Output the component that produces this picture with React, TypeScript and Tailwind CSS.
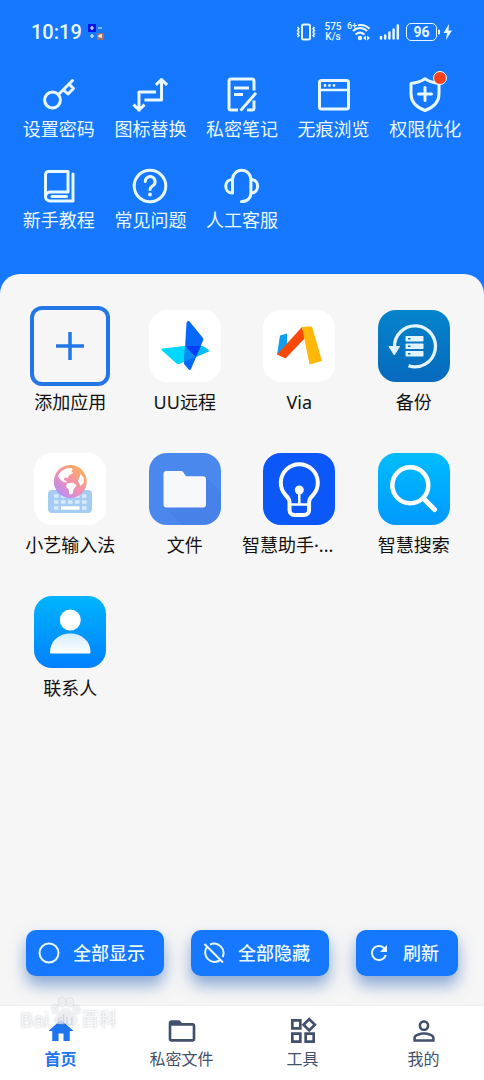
import type { ReactNode } from "react";
import { MdFolderOpen, MdHome, MdOutlineWidgets, MdPersonOutline, MdRefresh } from "react-icons/md";

/* Line icons of the header, all on a 36px grid */
function LineIcon({ children }: { children: ReactNode }) {
  return (
    <svg
      viewBox="0 0 36 36"
      className="size-9"
      fill="none"
      stroke="currentColor"
      strokeWidth="3"
      strokeLinecap="round"
      strokeLinejoin="round"
      aria-hidden="true"
    >
      {children}
    </svg>
  );
}

const shortcuts = [
  {
    label: "设置密码",
    icon: (
      <LineIcon>
        <circle cx="11.5" cy="23" r="7.9" />
        <path d="M17.5 17.5 31.500 3.500M22.500 13l4.500 4 5.500-5.500-4.500-4.500" />
      </LineIcon>
    ),
  },
  {
    label: "图标替换",
    icon: (
      <LineIcon>
        <path d="M14 23h15.5V3M25 6.800l4.500-4.300L34 6.800M22.500 15H7v18M2.500 28.700 7 33l4.500-4.300" strokeLinecap="square" />
      </LineIcon>
    ),
  },
  {
    label: "私密笔记",
    icon: (
      <LineIcon>
        <path d="M12.500 33H7a2 2 0 0 1-2-2V4a2 2 0 0 1 2-2h21a2 2 0 0 1 2 2v8M30 25v6a2 2 0 0 1-2 2h-3.500M11.500 11h12M11.500 17.500h6M31 17 17.500 32.500" strokeLinecap="square" />
      </LineIcon>
    ),
  },
  {
    label: "无痕浏览",
    icon: (
      <LineIcon>
        <rect x="3.500" y="3.500" width="29" height="28.500" rx="2" />
        <path d="M4 13h28" strokeWidth="2.500" />
        <path d="M9 8.500h.01M13.500 8.500h.01M18 8.500h.01" strokeWidth="2.800" />
      </LineIcon>
    ),
  },
  {
    label: "权限优化",
    badge: true,
    icon: (
      <LineIcon>
        <path d="M18 1.800C14 4.600 9 6 4 6.500v10.500c0 8 6 13.500 14 16.500 8-3 14-8.500 14-16.500V6.500C27 6 22 4.600 18 1.800Z" />
        <path d="M18 10.500v13M11.500 17h13" />
      </LineIcon>
    ),
  },
  {
    label: "新手教程",
    icon: (
      <LineIcon>
        <path d="M4.500 29V6.500a3 3 0 0 1 3-3H27v20.500H9a4.500 4.500 0 0 0 0 9h23V6" />
        <path d="M11 28.500h14.500" />
      </LineIcon>
    ),
  },
  {
    label: "常见问题",
    icon: (
      <LineIcon>
        <circle cx="18" cy="18" r="15.800" />
        <path d="M13.300 13.500a4.900 4.900 0 1 1 7.500 4.200c-1.800 1.200-2.800 2-2.800 3.800" />
        <path d="M18 26.500h.01" strokeWidth="3.800" />
      </LineIcon>
    ),
  },
  {
    label: "人工客服",
    icon: (
      <LineIcon>
        <path d="M8.500 25V11.500a9.200 9.200 0 0 1 18.400 0V24.500c0 5.500-3.500 9-9.400 9M8.500 11.500c-9 0-9 13.500 0 13.500M26.900 11.500c9 0 9 13.500 0 13.500" />
      </LineIcon>
    ),
  },
];

function AppIcon({ children }: { children: ReactNode }) {
  return (
    <svg viewBox="0 0 72 72" className="size-18" fill="none" aria-hidden="true">
      {children}
    </svg>
  );
}

const apps = [
  {
    name: "UU远程",
    bg: "bg-white",
    icon: (
      <AppIcon>
        <path d="M13.500 38.500 35.500 36H54l5.500 4a1 1 0 0 1 0 1.500L30 54a3 3 0 0 1-2.500-.5L13 40.500c-1-1-.5-1.800.5-2Z" fill="#00d8fb" />
        <path d="M53 36l6.500 4a1 1 0 0 1 0 1.500L46 47.500Z" fill="#0cbdf5" />
        <path d="M37.500 13c0-1.500 2-2.500 3-1.500L54 28c.5.7.6 1.300.3 2L42 59c-.5 1-1.500 1.200-2.300.4L35 54Z" fill="#0668f8" />
        <path d="M36.500 36H52l-5.500 11Z" fill="#0040f4" />
        <path d="M36 36 46.500 47 35.500 51.500Z" fill="#0a8cf5" />
      </AppIcon>
    ),
  },
  {
    name: "Via",
    bg: "bg-white",
    icon: (
      <AppIcon>
        <path d="M17 25.500 24 23.500V36L14 45Z" fill="#119ff0" />
        <path d="M39 17 14 44.500l8.500 4L42 28Z" fill="#fb4805" />
        <path d="M39 17l8.500-.5c1 0 1.700.5 2 1.500l9.500 33-12.500 3.500Z" fill="#ffb80a" />
      </AppIcon>
    ),
  },
  {
    name: "备份",
    bg: "bg-linear-to-b from-[#0584cb] to-[#0769bd]",
    icon: (
      <AppIcon>
        <path d="M16.500 37a20.500 20.500 0 1 1 14 18.800" stroke="#e4f4fe" strokeWidth="3.300" />
        <path d="M11 36.500h10.500L16.300 45Z" fill="#e4f4fe" stroke="#e4f4fe" strokeLinejoin="round" />
        <g fill="#e4f4fe">
          <rect x="27.500" y="26" width="18" height="5.500" rx=".8" />
          <rect x="27.500" y="33.500" width="18" height="5.500" rx=".8" />
          <rect x="27.500" y="41" width="18" height="5.500" rx=".8" />
        </g>
        <path d="M30 28.700h2.500M30 36.200h2.500M30 43.700h2.500" stroke="#0777c4" strokeWidth="1.500" />
      </AppIcon>
    ),
  },
  {
    name: "小艺输入法",
    bg: "bg-white",
    icon: (
      <AppIcon>
        <defs>
          <linearGradient id="globe" x1="24" y1="40" x2="46" y2="15" gradientUnits="userSpaceOnUse">
            <stop stopColor="#b98df5" />
            <stop offset=".45" stopColor="#f08fb4" />
            <stop offset="1" stopColor="#f9b060" />
          </linearGradient>
        </defs>
        <rect x="14" y="37" width="44" height="23" rx="4" fill="#a5cdf3" />
        <path d="M20 43h4.500M27 43h4.500M34 43h4.500M41 43h4.500M48 43h4.500M20 49h4.500M27 49h4.500M34 49h4.500M41 49h4.500M48 49h4.500M20 55h4.500M48 55h4.500" stroke="#d8eafc" strokeWidth="3.500" />
        <path d="M27 55h18.500" stroke="#fff" strokeWidth="3.500" />
        <circle cx="36.300" cy="28.500" r="16.500" fill="url(#globe)" />
        <path d="M24 23c2-5 7-8 13-8 2 .5 2 2 .5 3l1.500 2-3.500 2-2 3-3-.5-.5 2.500 3 1.500-1 1c-4 0-6-3-8-6.500ZM33 30.500l6-1 3.500 3-3 4-1 4.500-3 .5-1-5-2.500-3ZM46.500 21l3 3.500.5 5-3.500 3.500-2.500-5Z" fill="#fff" />
      </AppIcon>
    ),
  },
  {
    name: "文件",
    bg: "bg-[#4a88ee]",
    icon: (
      <AppIcon>
        <path d="m57 24 15 15v15c0 12-6 18-18 18H33.500L16 54Z" fill="#3e78dd" opacity=".35" />
        <path d="M17.500 18H32c1 0 1.800.4 2.300 1.200l2.700 4h17a3 3 0 0 1 3 3V51.500a3 3 0 0 1-3 3H17.500a3 3 0 0 1-3-3V21a3 3 0 0 1 3-3Z" fill="#f7f8fa" />
      </AppIcon>
    ),
  },
  {
    name: "智慧助手·...",
    long: true,
    bg: "bg-[#0b57f7]",
    icon: (
      <AppIcon>
        <path d="M26.500 49c0-3-2-5-4-7a18.500 18.500 0 1 1 27.600 0c-2 2-4 4-4 7v8c0 3-2 5-5 5h-9.600c-3 0-5-2-5-5Z" stroke="#fff" strokeWidth="4" />
        <path d="M27 51.500h19M36.300 37v14" stroke="#fff" strokeWidth="2.500" />
        <circle cx="36.300" cy="37" r="4.500" fill="#fff" />
      </AppIcon>
    ),
  },
  {
    name: "智慧搜索",
    bg: "bg-linear-to-b from-[#02bdfd] to-[#0399fd]",
    icon: (
      <AppIcon>
        <circle cx="32.300" cy="32.300" r="18" stroke="#fff" strokeWidth="4.500" />
        <path d="m46 46 10.500 10.500" stroke="#fff" strokeWidth="5" strokeLinecap="round" />
      </AppIcon>
    ),
  },
  {
    name: "联系人",
    bg: "bg-linear-to-b from-[#03b4fd] to-[#0480fd]",
    icon: (
      <AppIcon>
        <defs>
          <linearGradient id="body" x1="36" y1="37" x2="36" y2="58" gradientUnits="userSpaceOnUse">
            <stop stopColor="#d3ecfe" />
            <stop offset="1" stopColor="#fff" />
          </linearGradient>
        </defs>
        <circle cx="36.300" cy="24" r="10.500" fill="#fff" />
        <path d="M16 56c0-11 9-18.500 20.300-18.500S56.500 45 56.500 56c0 1-.5 1.500-1.500 1.500H17.500c-1 0-1.500-.5-1.500-1.500Z" fill="url(#body)" />
      </AppIcon>
    ),
  },
];

const actions = [
  {
    label: "全部显示",
    icon: (
      <svg viewBox="0 0 24 24" className="size-6" fill="none" stroke="currentColor" strokeWidth="2" aria-hidden="true">
        <circle cx="12" cy="12" r="9.500" />
      </svg>
    ),
  },
  {
    label: "全部隐藏",
    icon: (
      <svg viewBox="0 0 24 24" className="size-6" fill="none" stroke="currentColor" strokeWidth="2" aria-hidden="true">
        <path d="M2.500 3 21 21.500M5.200 5.700a9.400 9.400 0 0 0 13.200 13.200M8 3.600A9.400 9.400 0 0 1 20.600 16" />
      </svg>
    ),
  },
  { label: "刷新", icon: <MdRefresh className="size-6" aria-hidden="true" /> },
];

const tabs = [
  { label: "首页", icon: <MdHome size={30} aria-hidden="true" />, active: true },
  { label: "私密文件", icon: <MdFolderOpen size={32} aria-hidden="true" /> },
  { label: "工具", icon: <MdOutlineWidgets size={32} aria-hidden="true" /> },
  { label: "我的", icon: <MdPersonOutline size={32} aria-hidden="true" /> },
];

function StatusBar() {
  return (
    <div className="flex h-[63px] items-center pr-[31px] pl-[31px] text-[#e8f8ff]">
      <span className="font-[Roboto] text-[20px] leading-6 font-medium">10:19</span>
      <svg viewBox="0 0 16 16" className="ml-1.5 size-4" aria-hidden="true">
        <rect width="8" height="8" fill="#0a16e0" />
        <path d="M2 4h4M4 2v4M10 4h4M2 12h4M4 10v4" stroke="#e8f8ff" strokeWidth="1.200" />
        <rect x="9" y="9" width="7" height="7" rx="1" fill="#a3705f" />
        <path d="M10 13c0-2 2-3 4-3v4Z" fill="#f4e4d8" />
      </svg>

      <div className="ml-auto flex items-center">
        <svg viewBox="0 0 20 18" className="h-[18px] w-5" fill="none" stroke="currentColor" aria-hidden="true">
          <rect x="6" y="1.500" width="8" height="15" rx="1.500" strokeWidth="2" />
          <path d="m1.500 4 1.500 1.700L1.500 7.400 3 9l-1.500 1.700L3 12.400 1.500 14M18.500 4 17 5.700l1.500 1.700L17 9l1.500 1.700-1.500 1.700 1.500 1.600" strokeWidth="1.500" />
        </svg>
        <div className="ml-2 w-[18px] text-center font-[Roboto] text-[10px] leading-[10px] font-medium">
          <div>575</div>
          <div>K/s</div>
        </div>
        <div className="relative ml-[5px]">
          <span className="absolute -top-1 left-0 font-[Roboto] text-[9px] leading-[14px] font-medium">6+</span>
          <svg viewBox="0 0 24 18" className="h-[18px] w-6" fill="none" stroke="currentColor" strokeWidth="2" aria-hidden="true">
            <path d="M11 2.300c4.500-1 8.500.5 11.500 3.400M6 8c4-4 10-4 14 0M8.500 11.500c3-2.500 6-2.500 9 0" />
            <circle cx="13" cy="15" r="2.200" fill="currentColor" stroke="none" />
            <path d="m19 12.500-3 2.500 3 2.500ZM20 12.500l3 2.500-3 2.500Z" fill="currentColor" stroke="none" />
          </svg>
        </div>
        <svg viewBox="0 0 21 16" className="ml-2 h-4 w-[21px]" stroke="currentColor" strokeWidth="2.500" strokeLinecap="round" aria-hidden="true">
          <path d="M2 14.500v-1.500M6.200 14.500v-3M10.400 14.500v-6M14.600 14.500v-9M18.800 14.500v-13" />
        </svg>
        <div className="ml-1.5 flex h-[18px] w-[31px] items-center justify-center rounded-[5px] border border-current font-[Roboto] text-[14px] leading-4 font-bold">
          96
        </div>
        <svg viewBox="0 0 16 16" className="h-4 w-4" fill="currentColor" aria-hidden="true">
          <rect x="1" y="5.500" width="2" height="5" rx="1" />
          <path d="M12 0 6.500 9H10l-1 7 6-9.500h-3.500Z" />
        </svg>
      </div>
    </div>
  );
}

/* Faint white wordmark with the paw standing in the middle */
function Watermark() {
  return (
    <div className="pointer-events-none absolute -top-2.5 left-5 flex items-end font-['Liberation_Sans','Noto_Sans_CJK_SC',sans-serif] text-[18px] leading-6 text-white/70 drop-shadow-[0_0_1px_rgba(60,70,90,0.45)]">
      <span className="text-[20px]">Bai</span>
      <span className="relative h-9 w-8">
        <svg viewBox="0 0 32 36" className="absolute inset-0" fill="currentColor" aria-hidden="true">
          <ellipse cx="6" cy="13" rx="3" ry="4" />
          <ellipse cx="13" cy="6" rx="3" ry="4.300" />
          <ellipse cx="21" cy="6.500" rx="3" ry="4.300" />
          <ellipse cx="27.500" cy="13.500" rx="3" ry="4" />
          <path d="M16.500 13c-4 0-4.500 4-8 7-3.500 3-2.500 7.500 1.500 8 2.500.3 4.500-.6 7-.6s4.500.9 7 .6c4-.5 5-5 1.500-8-3.500-3-5-7-9-7Z" />
        </svg>
        <span className="absolute bottom-0 left-2 text-[15px] text-slate-400/30">du</span>
      </span>
      <span>百科</span>
    </div>
  );
}

export default function App() {
  return (
    <div className="flex min-h-screen flex-col bg-[#1677ff] font-['Noto_Sans','Noto_Sans_CJK_SC',sans-serif]">
      <header>
        <StatusBar />
        <div className="grid grid-cols-5 gap-y-[27px] px-[13px] pt-3.5 pb-[42px] text-[#e8f8ff]">
          {shortcuts.map((item) => (
            <button key={item.label} type="button" className="flex flex-col items-center gap-1">
              <span className="relative">
                {item.icon}
                {item.badge && (
                  <span className="absolute -top-1.5 -right-1 size-3.5 rounded-full border border-white bg-[#f5411c]" />
                )}
              </span>
              <span className="text-[18px] leading-6 whitespace-nowrap">{item.label}</span>
            </button>
          ))}
        </div>
      </header>

      <main className="flex flex-1 flex-col rounded-t-[20px] bg-[#f6f6f6] pt-9">
        <div className="grid grid-cols-4 gap-y-[39px] px-[13px] text-[18px] leading-6 text-[#111]">
          <button type="button" className="flex flex-col items-center gap-2">
            <span className="flex size-18 items-center justify-center rounded-lg ring-4 ring-[#2376e5]">
              <svg viewBox="0 0 28 28" className="size-7" stroke="#2376e5" strokeWidth="3.500" aria-hidden="true">
                <path d="M14 0v28M0 14h28" />
              </svg>
            </span>
            添加应用
          </button>
          {apps.map((app) => (
            <button key={app.name} type="button" className="flex min-w-0 flex-col items-center gap-2">
              <span className={`size-18 overflow-hidden rounded-[18px] ${app.bg}`}>{app.icon}</span>
              <span className={app.long ? "w-full truncate text-left" : "whitespace-nowrap"}>{app.name}</span>
            </button>
          ))}
        </div>

        <div className="mt-auto flex justify-between px-[26px] pt-6 pb-[29px]">
          {actions.map((action) => (
            <button
              key={action.label}
              type="button"
              className="flex h-[46px] items-center gap-3 rounded-[10px] bg-[#1677ff] pr-[19px] pl-[11px] text-[18px] leading-6 font-medium text-[#e8f8ff] shadow-[0_9px_16px_rgba(30,90,180,0.5)]"
            >
              {action.icon}
              {action.label}
            </button>
          ))}
        </div>
      </main>

      <nav className="relative grid grid-cols-4 border-t border-[#eeeeee] bg-white pt-[9px] pb-[9px]">
        {tabs.map((tab) => (
          <a
            key={tab.label}
            href="#"
            className={`flex flex-col items-center text-[16px] leading-6 ${
              tab.active ? "font-bold text-[#1f74f0]" : "text-[#42506c]"
            }`}
          >
            <span className="flex h-8 items-center">{tab.icon}</span>
            {tab.label}
          </a>
        ))}
        <Watermark />
      </nav>
    </div>
  );
}
